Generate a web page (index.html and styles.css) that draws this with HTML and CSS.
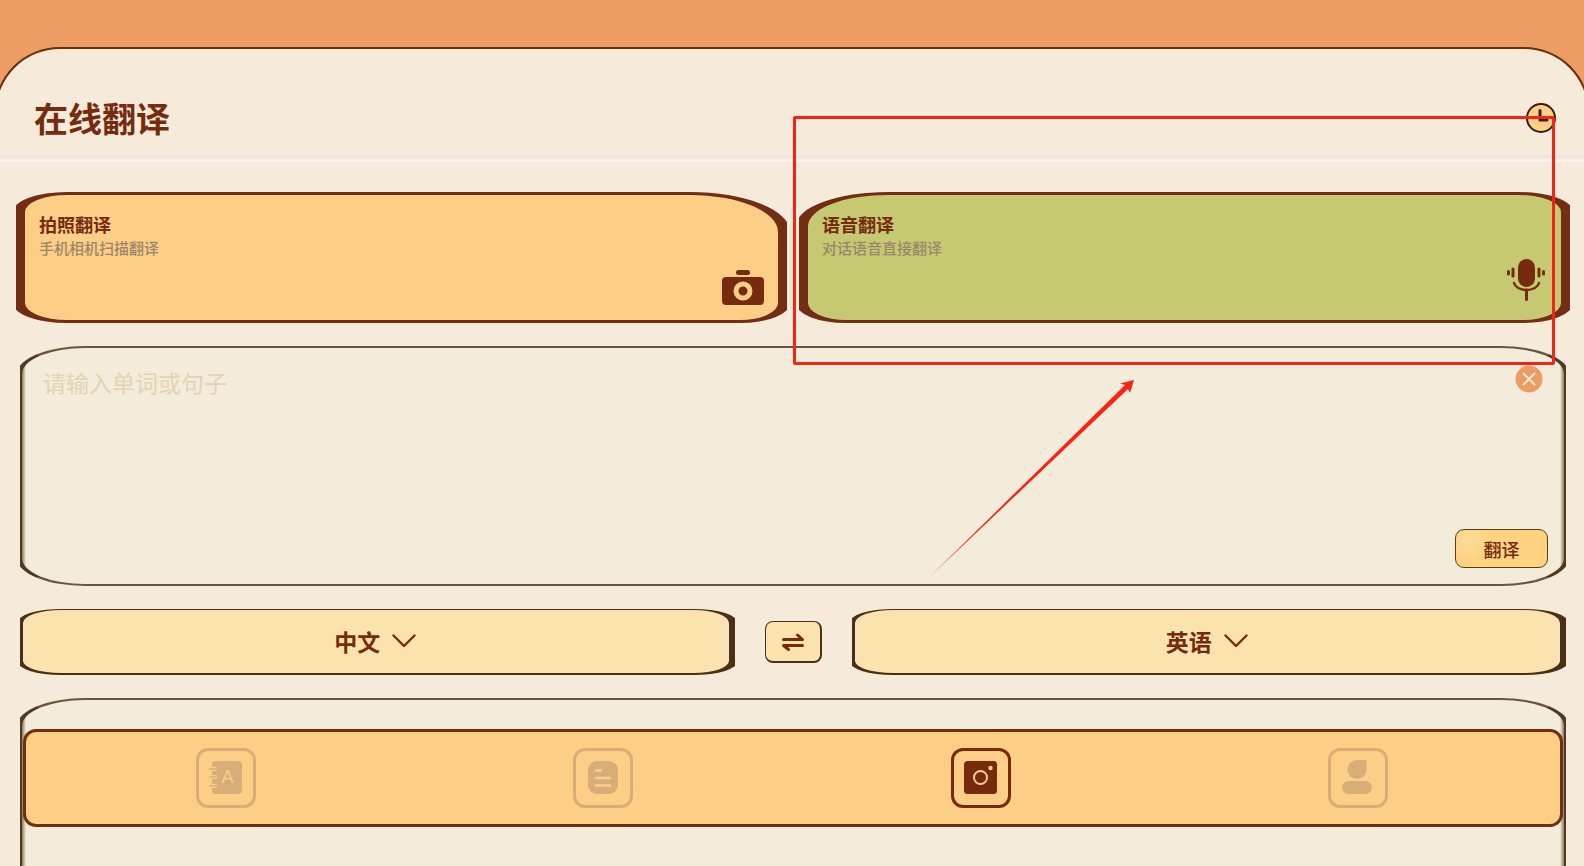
FILE: index.html
```html
<!DOCTYPE html>
<html lang="zh-CN">
<head>
<meta charset="UTF-8">
<meta name="viewport" content="width=device-width, initial-scale=1.0">
<title>在线翻译</title>
<link rel="stylesheet" href="styles.css">
</head>
<body>

<div class="page">
    <header class="header">
        <h1>在线翻译</h1>
        <button class="history" aria-label="历史记录">
            <svg width="32" height="32" viewBox="0 0 32 32">
                <circle cx="16" cy="16" r="14" fill="#fdce86" stroke="#3a1c06" stroke-width="2"/>
                <path d="M15 8.500v9.500h7" fill="none" stroke="#3a1c06" stroke-width="3" stroke-linecap="round" stroke-linejoin="round"/>
            </svg>
        </button>
    </header>

    <main class="content">
        <div class="cards">
            <button class="frame card photo">
                <span class="cardTitle">拍照翻译</span>
                <span class="cardText">手机相机扫描翻译</span>
                <svg class="cardIcon" width="42" height="35" viewBox="0 0 42 35">
                    <rect x="14" y="0" width="14" height="5" rx="2.500" fill="#762a0e"/>
                    <rect x="0" y="7" width="42" height="28" rx="4" fill="#762a0e"/>
                    <circle cx="21" cy="21" r="7" fill="none" stroke="#fdce86" stroke-width="5"/>
                </svg>
            </button>
            <button class="frame card voice">
                <span class="cardTitle">语音翻译</span>
                <span class="cardText">对话语音直接翻译</span>
                <svg class="cardIcon" width="42" height="46" viewBox="-2 0 42 46">
                    <rect x="11" y="0" width="17" height="28" rx="8.500" fill="#762a0e"/>
                    <path d="M7 24c1 4 6 7 12.500 7s11.500-3 12.500-7" fill="none" stroke="#762a0e" stroke-width="2.400" stroke-linecap="round"/>
                    <path d="M19.500 31v9.500" stroke="#762a0e" stroke-width="3" stroke-linecap="round"/>
                    <path d="M6 10v7M32 10v7M1.500 12.500v2.500M36.500 12.500v2.500" stroke="#762a0e" stroke-width="3" stroke-linecap="round"/>
                </svg>
            </button>
        </div>

        <div class="frame box inputBox">
            <textarea class="source" aria-label="原文" placeholder="请输入单词或句子"></textarea>
            <div class="inputTools">
                <button class="clear" aria-label="清空">
                    <svg width="28" height="28" viewBox="0 0 28 28">
                        <circle cx="14" cy="14" r="13.500" fill="#ec9d63"/>
                        <path d="M8.500 8.500l11 11M19.500 8.500l-11 11" stroke="#f8ead6" stroke-width="1.800" stroke-linecap="round"/>
                    </svg>
                </button>
                <button class="translate">翻译</button>
            </div>
        </div>

        <div class="languages">
            <label class="frame language">
                <select aria-label="源语言">
                    <option>中文</option>
                    <option>英语</option>
                </select>
                <svg width="24" height="14" viewBox="0 0 24 14"><path d="M1.500 1.500L12 12 22.500 1.500" fill="none" stroke="#762a0e" stroke-width="2.400" stroke-linecap="round" stroke-linejoin="round"/></svg>
            </label>
            <button class="swap" aria-label="交换语言">
                <svg width="24" height="20" viewBox="0 0 24 20">
                    <path d="M2.500 7.500h19l-5-4.500M21.500 13.500h-19l5 4" fill="none" stroke="#762a0e" stroke-width="3" stroke-linecap="round" stroke-linejoin="round"/>
                </svg>
            </button>
            <label class="frame language">
                <select aria-label="目标语言">
                    <option>英语</option>
                    <option>中文</option>
                </select>
                <svg width="24" height="14" viewBox="0 0 24 14"><path d="M1.500 1.500L12 12 22.500 1.500" fill="none" stroke="#762a0e" stroke-width="2.400" stroke-linecap="round" stroke-linejoin="round"/></svg>
            </label>
        </div>

        <div class="frame box resultBox"></div>
    </main>
</div>

<nav class="tabbar">
    <a class="tab" href="#words" aria-label="单词本">
        <svg width="34" height="34" viewBox="0 0 34 34">
            <rect x="3" y="0" width="30" height="33" rx="4" fill="#d8ad78"/>
            <path d="M0 8h6M0 16h6M0 25h6" stroke="#fdce86" stroke-width="4" stroke-linecap="round"/>
            <path d="M1 8h6M1 16h6M1 25h6" stroke="#d8ad78" stroke-width="1.500" stroke-linecap="round"/>
            <text class="iconLetter" x="18.500" y="22" text-anchor="middle">A</text>
        </svg>
    </a>
    <a class="tab" href="#articles" aria-label="文章">
        <svg width="34" height="34" viewBox="0 0 34 34">
            <rect x="2" y="0" width="30" height="33" rx="9" fill="#d8ad78"/>
            <path d="M10 9.500h5M10 17h14M10 24.500h14" stroke="#fdce86" stroke-width="2.400" stroke-linecap="round"/>
        </svg>
    </a>
    <a class="tab active" href="#translate" aria-label="翻译">
        <svg width="34" height="34" viewBox="0 0 34 34">
            <rect x="0" y="0" width="33" height="33" rx="3.500" fill="#762a0e"/>
            <circle cx="16.500" cy="16.500" r="6.500" fill="none" stroke="#fdce86" stroke-width="2"/>
            <circle cx="26.500" cy="7" r="2.200" fill="#fdce86"/>
        </svg>
    </a>
    <a class="tab" href="#me" aria-label="我的">
        <svg width="34" height="36" viewBox="0 0 34 36">
            <path d="M16 0h9.500v9.500A9.500 9.500 0 1 1 16 0z" fill="#d8ad78"/>
            <rect x="1" y="21" width="30" height="13" rx="6.500" fill="#d8ad78"/>
        </svg>
    </a>
</nav>

<div class="highlight"></div>
<svg class="arrow" width="208" height="200" viewBox="0 0 208 200">
    <defs>
        <linearGradient id="arrowFade" x1="0" y1="1" x2="1" y2="0">
            <stop offset="0" stop-color="#f32415" stop-opacity="0.5"/>
            <stop offset="0.2" stop-color="#f32415"/>
            <stop offset="1" stop-color="#ff2015"/>
        </linearGradient>
    </defs>
    <path d="M0 199.500L198 5l-5-1.500 14-3.500-4 13-2-4z" fill="url(#arrowFade)"/>
</svg>

</body>
</html>
```

FILE: styles.css
```css
/* Overall Style */
* {
    box-sizing: border-box;
}
body {
    margin: 0;
    height: 100vh;
    padding-top: 47px;
    overflow: hidden;
    font-family: "Noto Sans CJK SC", sans-serif;
    color: #762a0e;
    background: #ec9d63;
}
button {
    padding: 0;
    border: none;
    background: none;
    font-family: inherit;
    color: inherit;
    cursor: pointer;
}
svg {
    display: block;
    flex-shrink: 0;
}

/* Page and Header */
.page {
    margin: 0 -6px;
    padding: 0 4px;
    min-height: 100%;
    border: solid #6e2b10;
    border-width: 2px 2px 0;
    border-radius: 66px 66px 0 0;
    background: #f6eada;
}
.header {
    display: flex;
    align-items: center;
    justify-content: space-between;
    height: 107px;
    padding: 30px 27px 0 34px;
}
h1 {
    margin: 0;
    font-size: 34px;
    line-height: 40px;
}

/* Soft divider under the header */
.content {
    padding-top: 36px;
    background: linear-gradient(#e8e0d8, #fbf5f2 5px, #fbf5f2 6px, #f6eada 6px);
}

/* Frames with thick clipped sides */
.frame {
    position: relative;
    overflow: hidden;
    z-index: 0;
}
.frame::before {
    content: "";
    position: absolute;
    inset: 0 -3px;
    z-index: -1;
    border-style: solid;
}

/* Cards */
.cards {
    display: flex;
    gap: 12px;
    padding: 0 14px 0 16px;
}
.card {
    flex: 1;
    display: flex;
    flex-direction: column;
    height: 131px;
    padding: 19px 23px 18px;
    text-align: left;
}
.card::before {
    border-width: 3px 12px;
    border-color: #722e14;
}
.photo::before {
    background: #fdce86;
    border-radius: 54px 100px 50px 54px / 20px 40px 20px 20px;
}
.voice::before {
    background: #c7c972;
    border-radius: 92px 54px 50px 50px / 34px 20px 20px 20px;
}
.cardTitle {
    font-size: 18px;
    font-weight: 700;
    line-height: 26px;
}
.cardText {
    font-size: 15px;
    font-weight: 500;
    line-height: 22px;
    color: #9a8768;
}
.cardIcon {
    align-self: flex-end;
    margin-top: auto;
}

/* Text Boxes */
.box {
    margin: 23px 18px 0 20px;
}
.box::before {
    border-color: #6b563c #4f3a22;
    border-width: 2px 5px;
    border-radius: 68px / 28px;
    background: linear-gradient(to right, #8f7b60, #f3ecda 4px, #f3ecda calc(100% - 4px), #8f7b60);
}
.inputBox {
    display: flex;
    height: 240px;
    padding: 19px 18px 18px 23px;
}
.source {
    flex: 1;
    padding: 0;
    border: none;
    outline: none;
    resize: none;
    background: none;
    font-family: inherit;
    font-size: 23px;
    line-height: 34px;
    color: #762a0e;
}
.source::placeholder {
    color: #e3d3b2;
    opacity: 1;
}
.inputTools {
    display: flex;
    flex-direction: column;
    align-items: flex-end;
    justify-content: space-between;
}
.clear {
    margin-right: 5px;
}
.translate {
    width: 93px;
    height: 39px;
    border: 1px solid #5a3d10;
    border-radius: 9px;
    background: radial-gradient(circle at 14px 10px, #fbdc9c, #fdd382 20px);
    font-size: 18px;
    font-weight: 500;
}

/* Languages */
.languages {
    display: flex;
    align-items: center;
    gap: 30px;
    margin: 23px 18px 0 20px;
}
.language {
    flex: 1;
    display: flex;
    align-items: center;
    justify-content: center;
    gap: 12px;
    height: 66px;
    padding: 0 4px 2px 0;
}
.language::before {
    border-color: #4a3014;
    border-width: 1px 9px 2px 6px;
    border-radius: 44px / 14px;
    background: linear-gradient(to right, #f7e2bc, #fbe3ae 10px, #fbe3ae calc(100% - 10px), #f7e2bc);
}
.language select {
    appearance: none;
    padding: 0;
    border: none;
    outline: none;
    background: none;
    font-family: inherit;
    font-size: 23px;
    font-weight: 700;
    line-height: 34px;
    color: #762a0e;
}
.swap {
    display: flex;
    align-items: center;
    justify-content: center;
    width: 57px;
    height: 42px;
    border: 1px solid #4a3014;
    border-right-width: 2px;
    border-bottom-width: 2px;
    border-radius: 8px;
    background: #fbe3ae;
}
.resultBox {
    height: 240px;
}

/* Tab Bar */
.tabbar {
    position: fixed;
    left: 23px;
    right: 21px;
    bottom: 39px;
    display: flex;
    align-items: center;
    justify-content: space-around;
    height: 98px;
    padding: 0 13px 0 11px;
    border: 3px solid #6e2f14;
    border-radius: 13px;
    background: #fdce86;
}
.tab {
    display: flex;
    align-items: center;
    justify-content: center;
    width: 60px;
    height: 60px;
    border: 3px solid #d8ad78;
    border-radius: 12px;
}
.tab.active {
    border-color: #762a0e;
}
.iconLetter {
    font-family: "Liberation Sans", sans-serif;
    font-size: 18px;
    fill: #fdce86;
}

/* Highlight and Arrow */
.highlight {
    position: absolute;
    top: 116px;
    left: 793px;
    right: 29px;
    height: 249px;
    border: 3px solid #f32415;
    border-radius: 2px;
    pointer-events: none;
}
.arrow {
    position: absolute;
    top: 380px;
    left: 927px;
    pointer-events: none;
}
```
